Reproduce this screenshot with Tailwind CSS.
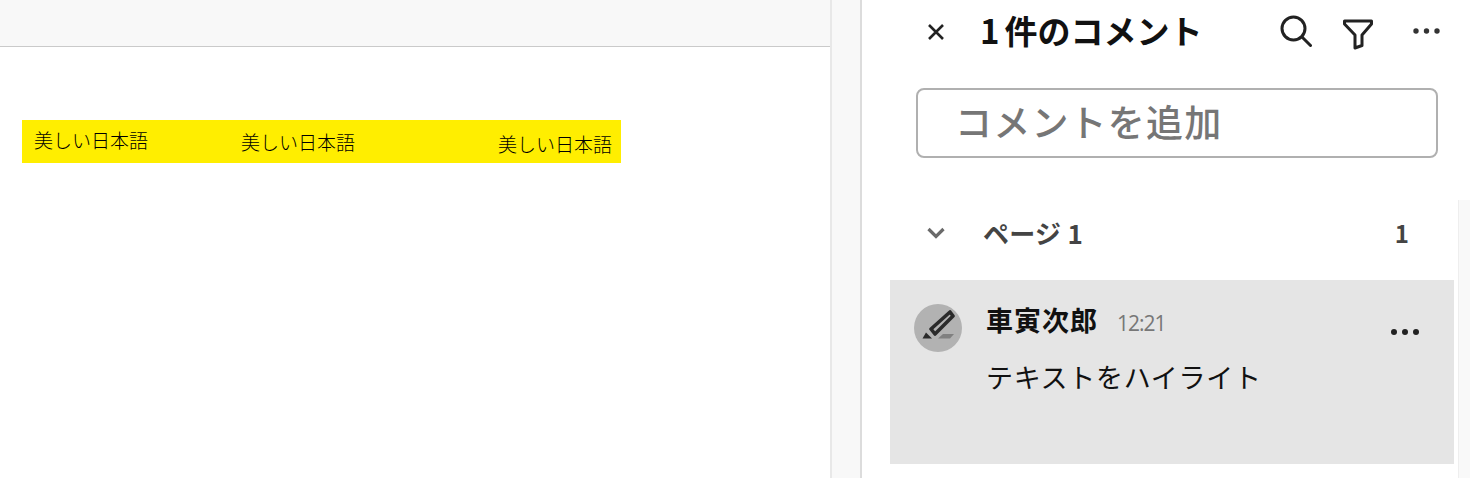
<!DOCTYPE html>
<html lang="ja">
<head>
  <meta charset="UTF-8" />
  <title>コメント</title>
  <script src="https://cdn.jsdelivr.net/npm/@tailwindcss/browser@4"></script>
</head>
<body class="bg-white overflow-hidden font-['Noto_Sans_CJK_JP',sans-serif]">
  <div class="flex w-[1470px] h-[478px]">

    <!-- Document -->
    <main class="w-[830px] shrink-0">
      <div class="h-[47px] bg-[#f8f8f8] border-b border-[#cacaca]"></div>
      <div class="mt-[73px] ml-[22px] w-[599px] h-[43px] bg-[#ffee00] flex items-start pl-3 text-[19px] leading-[28px] text-black font-light">
        <span class="w-[115px] mt-[6px] whitespace-nowrap">美しい日本語</span>
        <span class="w-[115px] mt-[8px] ml-[92px] whitespace-nowrap">美しい日本語</span>
        <span class="w-[115px] mt-[10px] ml-[142px] whitespace-nowrap">美しい日本語</span>
      </div>
    </main>

    <!-- Gutter -->
    <div class="w-[32px] shrink-0 bg-[#f8f8f8] border-l-2 border-r-2 border-l-[#e8e8e8] border-r-[#dcdcdc]"></div>

    <!-- Comments panel -->
    <aside class="flex-1 relative">
      <header class="h-[62px] flex items-center pl-[66px] pr-[30px]">
        <svg class="w-[16px] h-[16px] shrink-0 mt-[2px]" viewBox="0 0 16 16" fill="none" stroke="#222" stroke-width="2.6"><path d="M1 1l14 14M15 1L1 15" /></svg>
        <h1 class="ml-[36px] -mt-[2px] flex text-[33px] leading-[40px] font-bold text-[#111] whitespace-nowrap"><span>1</span><span class="ml-[5px]">件のコメント</span></h1>
        <div class="ml-auto flex items-center">
          <svg class="w-[32px] h-[32px]" viewBox="0 0 32 32" fill="none" stroke="#222" stroke-width="3" stroke-linecap="round"><circle cx="13.5" cy="13.5" r="11.5" /><path d="M22 22l8.5 8.5" /></svg>
          <svg class="w-[30px] h-[32px] ml-[31px] mt-[5px]" viewBox="0 0 30 32" fill="none" stroke="#222" stroke-width="3" stroke-linejoin="round"><path d="M1.5 3h27v3L19 17v10.5L12 30V17L1.500 6z" /></svg>
          <svg class="w-[27px] h-[8px] ml-[40px]" viewBox="0 0 27 8" fill="#333"><circle cx="3" cy="4" r="2.700" /><circle cx="13.500" cy="4" r="2.700" /><circle cx="24" cy="4" r="2.700" /></svg>
        </div>
      </header>

      <div class="mt-[26px] ml-[54px] w-[522px] h-[70px] border-2 border-[#b0b0b0] rounded-[8px] flex items-center pl-[37px] pb-[2px] text-[37px] text-[#767676] font-medium tracking-[1.2px]">コメントを追加</div>

      <div class="mt-[50px] h-[50px] flex items-center pl-[65px] pr-[61px] text-[#444] font-bold">
        <svg class="w-[18px] h-[12px] shrink-0" viewBox="0 0 18 12" fill="none" stroke="#6a6a6a" stroke-width="3.200"><path d="M1.500 2L9 9.500 16.500 2" /></svg>
        <span class="ml-[38px] flex text-[26px] leading-[36px] tracking-[0.3px] whitespace-nowrap"><span>ページ</span><span class="ml-[6px]">1</span></span>
        <span class="ml-auto text-[24px] leading-[36px]">1</span>
      </div>

      <article class="mt-[22px] ml-[28px] w-[564px] h-[184px] bg-[#e5e5e5] pl-[24px] pt-[24px] flex relative">
        <div class="w-[48px] h-[48px] rounded-full bg-[#b2b2b2] shrink-0 flex items-center justify-center">
          <svg class="w-[36px] h-[36px]" viewBox="0 0 36 36"><path d="M30 2l3 4-18 18-4-5z" fill="none" stroke="#2a2a2a" stroke-width="3.600" stroke-linejoin="round" /><path d="M2.500 28.500l3.500-6 6 6z" fill="#2a2a2a" /><path d="M23 24h11l-4 4.500H18z" fill="#808080" /></svg>
        </div>
        <div class="ml-[24px]">
          <div class="flex items-baseline -mt-[2px]">
            <span class="text-[27px] leading-[36px] font-bold text-[#111] tracking-[1px]">車寅次郎</span>
            <span class="ml-[19px] text-[21px] font-['Open_Sans',sans-serif] text-[#777] tracking-[-1px]">12:21</span>
          </div>
          <p class="mt-[19px] text-[27px] leading-[36px] text-[#111] tracking-[0.7px] whitespace-nowrap">テキストをハイライト</p>
        </div>
        <svg class="absolute left-[501px] top-[48px] w-[28px] h-[8px]" viewBox="0 0 28 8" fill="#222"><circle cx="3" cy="4" r="3" /><circle cx="14" cy="4" r="3" /><circle cx="25" cy="4" r="3" /></svg>
      </article>

      <!-- Scrollbar track -->
      <div class="absolute right-0 top-[200px] bottom-0 w-[12px] bg-[#f9f9f9] border-l border-[#eeeeee]"></div>
    </aside>
  </div>
</body>
</html>
